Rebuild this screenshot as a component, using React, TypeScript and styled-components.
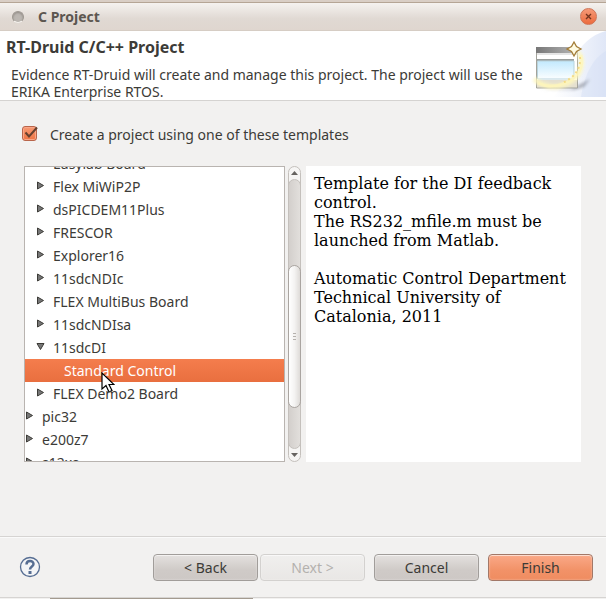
import React, { useState } from "react";
import styled, { createGlobalStyle } from "styled-components";

const GlobalStyle = createGlobalStyle`
  * { box-sizing: border-box; }
  body {
    margin: 0;
    background: #f2f1f0;
    color: #3c3b37;
    font: 14px/17px "Noto Sans", "Open Sans", sans-serif;
  }
  button, input { font: inherit; color: inherit; }
`;

const Dialog = styled.main`
  display: flex;
  flex-direction: column;
  height: 100vh;
`;

const TitleBar = styled.header`
  display: flex;
  flex: none;
  align-items: center;
  gap: 14px;
  height: 31px;
  padding: 1px 9px 0 12px;
  border-top: 2px solid #d9cec5;
  border-bottom: 1px solid #d6cdc4;
  background: linear-gradient(#b5a595 1px, #f5f2ef 1px, #e0d9d3 60%, #dfd6cf);
`;

const WindowTitle = styled.h1`
  flex: 1;
  margin: 0;
  color: #5c5650;
  font-size: 14px;
  line-height: 20px;
`;

const WindowMark = styled.span`
  width: 12px;
  height: 12px;
  border: 1px solid #9d9791;
  border-bottom-color: #f5f1ed;
  border-radius: 50%;
  background: #bcb7b2;
  box-shadow: inset 0 1px 2px #918c87;
`;

const CloseButton = styled.button`
  display: grid;
  place-items: center;
  width: 17px;
  height: 17px;
  padding: 0;
  border: 1px solid #cf7456;
  border-radius: 50%;
  background: linear-gradient(#f59a78, #ec6b3d);
`;

const Banner = styled.section`
  display: flex;
  flex: none;
  justify-content: space-between;
  min-height: 70px;
  border-bottom: 1px solid #d5d3d1;
  background: #fff;
`;

const BannerText = styled.div`
  flex: 1;
  padding: 6px 0 0 6px;
`;

const BannerTitle = styled.h2`
  margin: 0 0 9px;
  font-size: 16px;
  line-height: 20px;
`;

const BannerMessage = styled.p`
  max-width: 520px;
  margin: 0 0 0 5px;
`;

const BannerArt = styled.svg`
  flex: none;
  width: 75px;
  height: 66px;
`;

const Body = styled.section`
  display: flex;
  flex: 1;
  flex-direction: column;
  gap: 20px;
  min-height: 0;
  padding: 21px 25px 74px 24px;
`;

const TemplateOption = styled.label`
  display: flex;
  flex: none;
  align-items: center;
  gap: 12px;
  height: 24px;
  margin-left: -2px;
`;

const CheckSlot = styled.span`
  display: grid;
  width: 16px;
  height: 16px;
  & > * { grid-area: 1 / 1; }
`;

const CheckBox = styled.input`
  appearance: none;
  width: 15px;
  height: 15px;
  margin: 0;
  border: 1px solid #b9654a;
  border-radius: 3px;
  background: linear-gradient(#f79a74, #ee7443);
  box-shadow: inset 0 0 0 1px #f9a688;
`;

const CheckMark = styled.svg`
  width: 16px;
  height: 15px;
  pointer-events: none;
`;

const Panes = styled.div`
  display: flex;
  flex: 1;
  min-height: 0;
`;

const TreePane = styled.div`
  flex: 260 1 0;
  min-width: 0;
  overflow: hidden;
  border: 1px solid #b9b4b0;
  background: #fff;
`;

const Tree = styled.ul`
  margin: -15px 0 0;
  padding: 0;
  list-style: none;
`;

const TreeRow = styled.li<{ $level: number; $selected: boolean }>`
  display: flex;
  align-items: center;
  gap: 8px;
  height: 23px;
  padding-left: ${(p) => p.$level * 11}px;
  color: ${(p) => (p.$selected ? "#fff" : "#3c3b37")};
  background: ${(p) => (p.$selected ? "linear-gradient(#f47d4d, #e96f3f)" : "none")};
  white-space: nowrap;
`;

const Expander = styled.svg`
  flex: none;
  width: 9px;
  height: 9px;
  margin-bottom: 3px;
`;

const ScrollBar = styled.div`
  display: flex;
  flex: none;
  flex-direction: column;
  width: 13px;
  margin: 0 5px 0 3px;
  border: 1px solid #c4c0bc;
  border-radius: 7px;
  background: #f6f5f4;
`;

const ScrollButton = styled.button`
  display: grid;
  flex: none;
  place-items: center;
  height: 12px;
  padding: 0;
  border: 0;
  background: none;
`;

const Track = styled.div`
  display: flex;
  flex: 1;
  flex-direction: column;
  margin: 0 -1px;
  border: 1px solid #c4c0bc;
  border-radius: 7px;
  background: linear-gradient(90deg, #d3cfcc, #e2dfdc);
`;

const TrackGap = styled.div<{ $share: number }>`
  flex: ${(p) => p.$share} 1 0;
`;

const Thumb = styled.div`
  display: grid;
  flex: 143 1 0;
  place-content: center;
  gap: 2px;
  margin: 0 -1px;
  border: 1px solid #aaa5a1;
  border-radius: 7px;
  background: linear-gradient(90deg, #fff, #f4f3f2 50%, #dedbd8);
`;

const Grip = styled.span`
  width: 3px;
  height: 1px;
  background: #b5b1ad;
`;

const Description = styled.article`
  flex: 260 1 0;
  min-width: 0;
  padding: 8px;
  overflow: hidden;
  color: #000;
  background: #fff;
  font: 16px/19px "DejaVu Serif", serif;
`;

const Paragraph = styled.p`
  margin: 0 0 19px;
`;

const Footer = styled.footer`
  display: flex;
  flex: none;
  align-items: center;
  height: 62px;
  padding: 0 13px 0 19px;
  border-top: 1px solid #d6d4d2;
  border-bottom: 1px solid #d6d4d2;
  box-shadow: inset 0 1px #fafafa;
`;

const HelpButton = styled.button`
  width: 22px;
  height: 22px;
  margin-right: auto;
  padding: 0;
  border: 0;
  background: none;
`;

const ActionButton = styled.button<{ $primary?: boolean; $spaced?: boolean }>`
  flex: 0 1 105px;
  height: 27px;
  margin-left: ${(p) => (p.$spaced ? 9 : 2)}px;
  padding: 0 4px;
  border: 1px solid ${(p) => (p.$primary ? "#a27868" : "#a19d9a")};
  border-radius: 4px;
  background: ${(p) =>
    p.$primary
      ? "linear-gradient(#faa988, #f29268 60%, #ef8c60)"
      : "linear-gradient(#e4e1df, #cfcac7 60%, #cdc8c5)"};
  box-shadow: inset 0 1px #ffffff88, inset 0 0 2px #ffffff88;

  &:disabled {
    border-color: #d3d1cf;
    color: #b4b1ae;
    background: linear-gradient(#f0efee, #e9e7e5);
  }
`;

const BackgroundEdge = styled.div`
  flex: none;
  width: 203px;
  height: 1px;
  margin-left: 50px;
  background: #a39a8f;
`;

const Pointer = styled.svg`
  position: absolute;
  left: 37px;
  top: 10px;
  width: 14px;
  height: 21px;
  pointer-events: none;
`;

const RowLabel = styled.span`
  position: relative;
`;

type Node = { name: string; level: number; state?: "open" | "leaf" };

const nodes: Node[] = [
  { name: "Easylab Board", level: 1 },
  { name: "Flex MiWiP2P", level: 1 },
  { name: "dsPICDEM11Plus", level: 1 },
  { name: "FRESCOR", level: 1 },
  { name: "Explorer16", level: 1 },
  { name: "11sdcNDIc", level: 1 },
  { name: "FLEX MultiBus Board", level: 1 },
  { name: "11sdcNDIsa", level: 1 },
  { name: "11sdcDI", level: 1, state: "open" },
  { name: "Standard Control", level: 2, state: "leaf" },
  { name: "FLEX Demo2 Board", level: 1 },
  { name: "pic32", level: 0 },
  { name: "e200z7", level: 0 },
  { name: "s12xs", level: 0 },
];

function WizardArt() {
  return (
    <BannerArt viewBox="0 0 75 66" aria-hidden="true">
      <defs>
        <linearGradient id="sweep" x1="0" x2="1">
          <stop offset="0" stopColor="#ffffff" />
          <stop offset="1" stopColor="#e0e7f7" />
        </linearGradient>
        <linearGradient id="bar" x1="0" x2="1">
          <stop offset="0" stopColor="#777" />
          <stop offset="1" stopColor="#b8b8b8" />
        </linearGradient>
        <linearGradient id="pane" x1="0" x2="0" y1="0" y2="1">
          <stop offset="0" stopColor="#c2e9fd" />
          <stop offset="1" stopColor="#fbfeff" />
        </linearGradient>
        <filter id="soft" x="-30%" y="-30%" width="160%" height="160%">
          <feGaussianBlur stdDeviation="1.5" />
        </filter>
      </defs>
      <path d="M75 0C60 4 49 14 43 29C38 44 32 56 22 66H75Z" fill="url(#sweep)" />
      <path d="M75 20C64 26 54 40 50 66H75Z" fill="#d3def4" opacity=".45" />
      <path d="M8 58L40 58L59 48L53 56L43 59Z" fill="#777b87" opacity=".55" filter="url(#soft)" />
      <path d="M5 16H47V57H5Z" fill="#fff" />
      <path d="M5 16H47V22H5Z" fill="url(#bar)" />
      <path d="M5 22H47V24H5Z" fill="#e5e5e5" />
      <path d="M6 28H43V30H6Z" fill="#999e9c" />
      <path d="M6.5 30H43V48H6.5Z" fill="url(#pane)" stroke="#b9d3dc" />
      <path d="M5 49H47V57H5Z" fill="#e4dfd0" />
      <path d="M5.500 22V57H46.500V22" fill="none" stroke="#a3a39b" />
      <path d="M47 21C54 31 50 42 42 49C32 57 16 59 3 48" fill="none" stroke="#fff8bd" strokeWidth="5" opacity=".8" filter="url(#soft)" />
      <path d="M50 24C53 36 47 46 36 51C26 56 14 56 7 52" fill="none" stroke="#fff6b8" strokeWidth="3" opacity=".65" />
      <path d="M49 26C50 38 43 47 31 52" fill="none" stroke="#f4da82" strokeWidth="2" strokeDasharray="2 3" />
      <path d="M43 11L45.500 15.500L50 18L45.500 20.500L43 25L40.500 20.500L36 18L40.500 15.500Z" fill="#fffbe3" stroke="#a37c36" strokeWidth="1.3" />
    </BannerArt>
  );
}

export default function App() {
  const [useTemplate, setUseTemplate] = useState(true);
  const [selected, setSelected] = useState("Standard Control");

  return (
    <>
      <GlobalStyle />
      <Dialog>
        <TitleBar>
          <WindowMark />
          <WindowTitle>C Project</WindowTitle>
          <CloseButton aria-label="Close">
            <svg width="7" height="7" viewBox="0 0 7 7">
              <path d="M1 1L6 6M6 1L1 6" stroke="#74351f" strokeWidth="1.4" />
            </svg>
          </CloseButton>
        </TitleBar>
        <Banner>
          <BannerText>
            <BannerTitle>RT-Druid C/C++ Project</BannerTitle>
            <BannerMessage>
              Evidence RT-Druid will create and manage this project. The project will use the ERIKA Enterprise RTOS.
            </BannerMessage>
          </BannerText>
          <WizardArt />
        </Banner>
        <Body>
          <TemplateOption>
            <CheckSlot>
              <CheckBox type="checkbox" checked={useTemplate} onChange={(e) => setUseTemplate(e.target.checked)} />
              {useTemplate && (
                <CheckMark viewBox="0 0 16 15">
                  <path d="M3.5 6.500L7 10.500L15 1.500" fill="none" stroke="#66402f" strokeWidth="2" />
                </CheckMark>
              )}
            </CheckSlot>
            Create a project using one of these templates
          </TemplateOption>
          <Panes>
            <TreePane>
              <Tree role="tree" aria-label="Templates">
                {nodes.map(({ name, level, state }) => (
                  <TreeRow
                    key={name}
                    role="treeitem"
                    aria-selected={selected === name}
                    $level={level}
                    $selected={selected === name}
                    onClick={() => setSelected(name)}
                  >
                    <Expander viewBox="0 0 9 9">
                      {state !== "leaf" && (
                        <path
                          d={state === "open" ? "M1 1.5H8L4.5 7.5Z" : "M1.5 1L7.5 4.5L1.5 8Z"}
                          fill="#777"
                          stroke="#3c3b37"
                        />
                      )}
                    </Expander>
                    <RowLabel>
                      {name}
                      {name === "Standard Control" && (
                        <Pointer viewBox="0 0 14 21">
                          <path d="M1 1V17L5 13.5L8 20L11 18.5L8 12.5H13Z" fill="#fff" stroke="#000" strokeWidth="1.2" />
                        </Pointer>
                      )}
                    </RowLabel>
                  </TreeRow>
                ))}
              </Tree>
            </TreePane>
            <ScrollBar>
              <ScrollButton aria-label="Scroll up">
                <svg width="7" height="4" viewBox="0 0 7 4"><path d="M0 4L3.5 0L7 4Z" fill="#666360" /></svg>
              </ScrollButton>
              <Track>
                <TrackGap $share={86} />
                <Thumb><Grip /><Grip /><Grip /></Thumb>
                <TrackGap $share={40} />
              </Track>
              <ScrollButton aria-label="Scroll down">
                <svg width="7" height="4" viewBox="0 0 7 4"><path d="M0 0L3.5 4L7 0Z" fill="#666360" /></svg>
              </ScrollButton>
            </ScrollBar>
            <Description>
              <Paragraph>
                Template for the DI feedback control.
                <br />
                The RS232_mfile.m must be launched from Matlab.
              </Paragraph>
              <Paragraph>
                Automatic Control Department
                <br />
                Technical University of Catalonia, 2011
              </Paragraph>
            </Description>
          </Panes>
        </Body>
        <Footer>
          <HelpButton aria-label="Help">
            <svg width="22" height="22" viewBox="0 0 22 22">
              <circle cx="11" cy="11" r="9.5" fill="#f4f5f7" stroke="#566d92" strokeWidth="1.3" />
              <path d="M7.5 8.5C7.5 4 14.5 4 14.5 8C14.5 10.5 11 10.5 11 13.5" fill="none" stroke="#566d92" strokeWidth="2.5" />
              <path d="M9.5 15H12.5V18H9.5Z" fill="#566d92" />
            </svg>
          </HelpButton>
          <ActionButton>&lt; Back</ActionButton>
          <ActionButton disabled>Next &gt;</ActionButton>
          <ActionButton $spaced>Cancel</ActionButton>
          <ActionButton $primary $spaced>Finish</ActionButton>
        </Footer>
        <BackgroundEdge />
      </Dialog>
    </>
  );
}
